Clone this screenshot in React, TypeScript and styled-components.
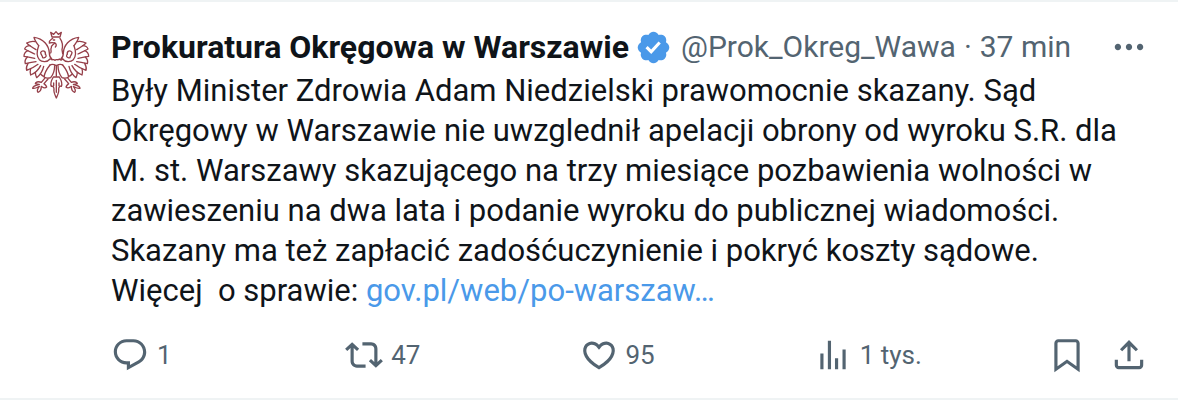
import React from 'react';
import styled, { createGlobalStyle } from 'styled-components';

const GlobalStyle = createGlobalStyle`
  *, *::before, *::after { box-sizing: border-box; }
  body {
    margin: 0;
    background: #fff;
    color: #0f1419;
    font-family: Roboto, "Liberation Sans", sans-serif;
  }
`;

const Post = styled.article`
  display: flex;
  gap: 15px;
  padding: 25px 30px 24px 16px;
  border-top: 2px solid #eff3f4;
  border-bottom: 2px solid #eff3f4;
`;

const Avatar = styled.svg`
  flex: none;
  width: 80px;
  height: 80px;
  margin-top: -2px;
  border-radius: 50%;
  fill: none;
  stroke: #96404a;
  stroke-width: 4;
  stroke-linecap: round;
  stroke-linejoin: round;
`;

const Content = styled.div`
  flex: 1;
  min-width: 0;
`;

const Header = styled.header`
  display: flex;
  align-items: center;
  height: 40px;
  margin-bottom: 4px;
  font-size: 30px;
  line-height: 40px;
  white-space: nowrap;
`;

const Name = styled.a`
  color: #0f1419;
  font-size: 32px;
  font-weight: 700;
  text-decoration: none;
`;

const Meta = styled.a`
  color: #536471;
  text-decoration: none;
`;

const Dot = styled.span`
  padding: 0 8px;
  color: #536471;
`;

const Badge = styled.svg`
  flex: none;
  width: 37px;
  height: 37px;
  margin: 0 9px 0 6px;
  fill: #4a99e9;
`;

const Body = styled.p`
  margin: 0;
  font-size: 31px;
  line-height: 40px;
  white-space: pre-wrap;
`;

const BodyLink = styled.a`
  color: #4a99e9;
  text-decoration: none;
`;

const Actions = styled.div`
  display: grid;
  grid-template-columns: repeat(4, 1fr) auto auto;
  align-items: center;
  margin-top: 25px;
`;

const IconButton = styled.button<{ $push?: boolean; $indent?: number }>`
  display: flex;
  align-items: center;
  gap: 8px;
  margin: 0 0 0 ${(p) => (p.$push ? 'auto' : `${p.$indent ?? 0}px`)};
  padding: 0;
  border: 0;
  background: none;
  color: #536471;
  font: inherit;
  font-size: 26px;
  line-height: 38px;
  white-space: nowrap;
  cursor: pointer;
`;

const Glyph = styled.svg`
  flex: none;
  width: 38px;
  height: 38px;
  fill: currentColor;
`;

const icons = {
  more: 'M3 12c0-1.1.9-2 2-2s2 .9 2 2-.9 2-2 2-2-.9-2-2zm9 2c1.1 0 2-.9 2-2s-.9-2-2-2-2 .9-2 2 .9 2 2 2zm7 0c1.1 0 2-.9 2-2s-.9-2-2-2-2 .9-2 2 .9 2 2 2z',
  reply: 'M1.751 10c0-4.42 3.584-8 8.005-8h4.366c4.49 0 8.129 3.64 8.129 8.13 0 2.96-1.607 5.68-4.196 7.11l-8.054 4.46v-3.69h-.067c-4.49.1-8.183-3.51-8.183-8.01zm8.005-6c-3.317 0-6.005 2.69-6.005 6 0 3.37 2.77 6.08 6.138 6.01l.351-.01h1.761v2.3l5.087-2.81c1.951-1.08 3.163-3.13 3.163-5.36 0-3.39-2.744-6.13-6.129-6.13H9.756z',
  repost: 'M4.5 3.88l4.432 4.14-1.364 1.46L5.5 7.55V16c0 1.1.896 2 2 2H13v2H7.5c-2.209 0-4-1.79-4-4V7.55L1.432 9.48.068 8.02 4.5 3.88zM16.5 6H11V4h5.5c2.209 0 4 1.79 4 4v8.45l2.068-1.93 1.364 1.46-4.432 4.14-4.432-4.14 1.364-1.46 2.068 1.93V8c0-1.1-.896-2-2-2z',
  like: 'M16.697 5.5c-1.222-.06-2.679.51-3.89 2.16l-.805 1.09-.806-1.09C9.984 6.01 8.526 5.44 7.304 5.5c-1.243.07-2.349.78-2.91 1.91-.552 1.12-.633 2.78.479 4.82 1.074 1.97 3.257 4.27 7.129 6.61 3.87-2.34 6.052-4.64 7.126-6.61 1.111-2.04 1.03-3.7.477-4.82-.561-1.13-1.666-1.84-2.908-1.91zm4.187 7.69c-1.351 2.48-4.001 5.12-8.379 7.67l-.503.3-.504-.3c-4.379-2.55-7.029-5.19-8.382-7.67-1.36-2.5-1.41-4.86-.514-6.67.887-1.79 2.647-2.91 4.601-3.01 1.651-.09 3.368.56 4.798 2.01 1.429-1.45 3.146-2.1 4.796-2.01 1.954.1 3.714 1.22 4.601 3.01.896 1.81.846 4.17-.514 6.67z',
  views: 'M8.75 21V3h2v18h-2zM18 21V8.5h2V21h-2zM4 21l.004-10h2L6 21H4zm9.248 0v-7h2v7h-2z',
  bookmark: 'M4 4.5C4 3.12 5.119 2 6.5 2h11C18.881 2 20 3.12 20 4.5v18.44l-8-5.71-8 5.71V4.5zM6.5 4c-.276 0-.5.22-.5.5v14.56l6-4.29 6 4.29V4.5c0-.28-.224-.5-.5-.5h-11z',
  share: 'M12 2.59l5.7 5.7-1.41 1.42L13 6.41V16h-2V6.41l-3.3 3.3-1.41-1.42L12 2.59zM21 15l-.02 3.51c0 1.38-1.12 2.49-2.5 2.49H5.5C4.11 21 3 19.88 3 18.5V15h2v3.5c0 .28.22.5.5.5h12.98c.28 0 .5-.22.5-.5L19 15h2z',
};

const Icon = ({ name }: { name: keyof typeof icons }) => (
  <Glyph viewBox="0 0 24 24" aria-hidden="true">
    <path d={icons[name]} />
  </Glyph>
);

// One half of the eagle: wing feathers, curled shoulder, thigh and talons.
const EagleHalf = () => (
  <>
    <path d="M126 133C120 128 118 122 118 114C117 92 100 70 72 67C74 76 80 84 86 92" />
    <path d="M76 80C68 78 58 80 50 84C58 92 68 98 78 104" />
    <path d="M60 92C52 92 46 96 44 102C54 108 64 112 74 117" />
    <path d="M54 107C46 110 42 118 42 124C54 126 64 128 74 130" />
    <path d="M52 126C46 132 44 140 46 146C56 144 66 142 78 140" />
    <path d="M54 145C50 152 48 160 50 166C62 162 74 156 84 148" />
    <path d="M62 161C60 168 60 174 62 180C76 174 86 164 92 152" />
    <path d="M76 172C76 178 78 184 80 188C90 180 98 168 101 154" />
    <path d="M92 178C96 182 98 184 102 184" />
    <path d="M86 92C80 108 80 124 88 134C96 142 112 142 120 132" />
    <path d="M106 118C108 108 98 104 92 112C92 120 98 122 98 128C104 130 110 126 108 120" />
    <path d="M120 150C112 160 104 172 102 186C108 190 116 190 122 188C130 178 134 166 134 152" />
    <path d="M104 190L94 202C84 198 76 202 76 206C82 208 86 208 88 208C80 210 68 212 68 220C76 222 84 216 88 214C82 222 80 228 84 232C92 230 94 222 94 214C100 218 104 222 110 216C108 210 104 208 102 206L114 192" />
  </>
);

const Eagle = () => (
  <Avatar viewBox="18 30 240 240" role="img" aria-label="Prokuratura Okręgowa w Warszawie">
    <EagleHalf />
    <g transform="translate(278 0) scale(-1 1)">
      <EagleHalf />
    </g>
    <path d="M126 66L122 52L131 58L138 50L145 58L154 52L150 66Z" />
    <path d="M128 70C124 74 116 76 118 84C124 82 128 82 134 84C130 90 122 92 124 98C120 104 126 108 122 114M150 70C160 84 158 96 156 104L158 116" />
    <path d="M130 75H134M134 84C140 86 140 92 136 96" />
    <path d="M122 132C126 138 130 130 135 136C139 130 143 138 148 132C152 138 156 134 158 132" />
    <path d="M120 150C126 146 132 148 139 152C146 148 152 146 158 150M139 152V184" />
    <path d="M130 186C124 196 120 206 124 214C128 212 132 216 132 222C130 232 136 242 139 249C142 242 148 232 146 222C146 216 150 212 154 214C158 206 154 196 148 186ZM139 196V232M131 204V212M147 204V212" />
  </Avatar>
);

export default function App() {
  return (
    <>
      <GlobalStyle />
      <Post>
        <Eagle />
        <Content>
          <Header>
            <Name href="#profile">Prokuratura Okręgowa w Warszawie</Name>
            <Badge viewBox="0 0 22 22" role="img" aria-label="Zweryfikowane konto">
              <path d="M20.396 11c-.018-.646-.215-1.275-.57-1.816-.354-.54-.852-.972-1.438-1.246.223-.607.27-1.264.14-1.897-.131-.634-.437-1.218-.882-1.687-.47-.445-1.053-.75-1.687-.882-.633-.13-1.29-.083-1.897.14-.273-.587-.704-1.086-1.245-1.44S11.647 1.62 11 1.604c-.646.017-1.273.213-1.813.568s-.969.854-1.24 1.44c-.608-.223-1.267-.272-1.902-.14-.635.13-1.22.436-1.69.882-.445.47-.749 1.055-.878 1.688-.13.633-.08 1.29.144 1.896-.587.274-1.087.705-1.443 1.245-.356.54-.555 1.17-.574 1.817.02.647.218 1.276.574 1.817.356.54.856.972 1.443 1.245-.224.606-.274 1.263-.144 1.896.13.634.433 1.218.877 1.688.47.443 1.054.747 1.687.878.633.132 1.29.084 1.897-.136.274.586.705 1.084 1.246 1.439.54.354 1.17.551 1.816.569.647-.016 1.276-.213 1.817-.567s.972-.854 1.245-1.44c.604.239 1.266.296 1.903.164.636-.132 1.22-.447 1.68-.907.46-.46.776-1.044.908-1.681s.075-1.299-.165-1.903c.586-.274 1.084-.705 1.439-1.246.354-.54.551-1.17.569-1.816zM9.662 14.85l-3.429-3.428 1.293-1.302 2.072 2.072 4.4-4.794 1.347 1.246z" />
            </Badge>
            <Meta href="#profile">@Prok_Okreg_Wawa</Meta>
            <Dot>·</Dot>
            <Meta href="#post">37 min</Meta>
            <IconButton $push aria-label="Więcej">
              <Icon name="more" />
            </IconButton>
          </Header>
          <Body>
            {'Były Minister Zdrowia Adam Niedzielski prawomocnie skazany. Sąd\nOkręgowy w Warszawie nie uwzglednił apelacji obrony od wyroku S.R. dla\nM. st. Warszawy skazującego na trzy miesiące pozbawienia wolności w\nzawieszeniu na dwa lata i podanie wyroku do publicznej wiadomości.\nSkazany ma też zapłacić zadośćuczynienie i pokryć koszty sądowe.'}
          </Body>
          <Body>
            {'Więcej  o sprawie: '}
            <BodyLink href="#link">gov.pl/web/po-warszaw…</BodyLink>
          </Body>
          <Actions>
            <IconButton aria-label="Odpowiedzi: 1"><Icon name="reply" />1</IconButton>
            <IconButton aria-label="Podania dalej: 47"><Icon name="repost" />47</IconButton>
            <IconButton aria-label="Polubienia: 95"><Icon name="like" />95</IconButton>
            <IconButton aria-label="Wyświetlenia: 1 tys."><Icon name="views" />1 tys.</IconButton>
            <IconButton aria-label="Dodaj do zakładek"><Icon name="bookmark" /></IconButton>
            <IconButton $indent={24} aria-label="Udostępnij"><Icon name="share" /></IconButton>
          </Actions>
        </Content>
      </Post>
    </>
  );
}
